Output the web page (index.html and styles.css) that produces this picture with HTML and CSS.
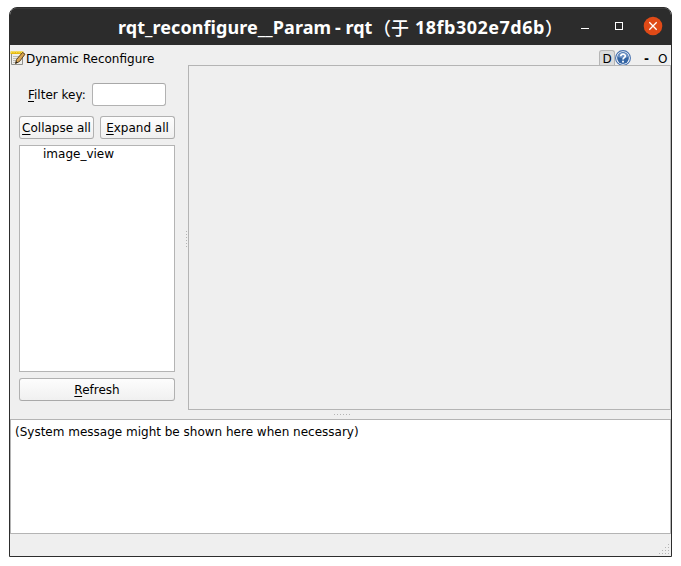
FILE: index.html
```html
<!DOCTYPE html>
<html lang="zh-CN">
<head>
<meta charset="utf-8">
<title>rqt_reconfigure__Param - rqt</title>
<link rel="stylesheet" href="styles.css">
</head>
<body>
<div class="window">
  <header class="titlebar">
    <h1 class="title"><span class="t-name">rqt_reconfigure__Param</span><span class="t-app">- rqt</span><span class="t-cjk">（于</span><span class="t-host">18fb302e7d6b</span><span class="t-cjk">）</span></h1>
    <svg class="controls" width="90" height="36" viewBox="0 0 90 36">
      <path d="M4 20.5h8" stroke="#fff"/>
      <rect x="38.500" y="14.500" width="7" height="7" fill="none" stroke="#fff"/>
      <circle cx="76" cy="18" r="9.300" fill="#e04a17"/>
      <path d="M72.300 14.300l7.400 7.400M79.700 14.300l-7.400 7.400" stroke="#fff" stroke-width="1.300"/>
    </svg>
  </header>
  <main class="content">
    <div class="dock">
      <svg class="note" width="16" height="16" viewBox="0 0 16 16">
        <path d="M1.500 3.500h11v11h-11z" fill="#eeeeec" stroke="#8f908c"/>
        <path d="M3 6.500h8M3 8.500h6M3 10.500h5M3 12.500h4" stroke="#bcbdb9"/>
        <path d="M.5 1.500h13v2.500H.5z" fill="#e5b913"/>
        <path d="M1 1h1.300v2H1zM3.500 1h1.200v2H3.500zM6 1h1.200v2H6zM8.500 1h1.200v2H8.500zM11 1h1.200v2H11z" fill="#f8df4c"/>
        <path d="M5.500 13.500l1-4L12.500 2.500l2.500 1.700-5.500 7.300z" fill="#d8a452" stroke="#5d4420"/>
        <path d="M5.500 13.500l.7-2.300 1.600 1.200z" fill="#222"/>
      </svg>
      <span class="dock-title">Dynamic Reconfigure</span>
      <span class="dock-d">D</span>
      <svg class="help" width="16" height="16" viewBox="0 0 16 16">
        <circle cx="8" cy="8" r="7.400" fill="#fff" stroke="#446fae" stroke-width="1.100"/>
        <circle cx="8" cy="8" r="5.900" fill="#3465a4"/>
        <path d="M2.500 7a5.600 5.600 0 0 1 11 0q-5 2-11 0" fill="#6b90c3"/>
        <path d="M5.800 6.200C5.800 3.500 10.300 3.500 10.300 6C10.300 7.600 8 7.600 8 9.500" fill="none" stroke="#fff" stroke-width="1.700"/>
        <rect x="7.100" y="10.700" width="1.800" height="1.800" fill="#fff"/>
      </svg>
      <b class="dock-min">-</b>
      <span class="dock-o">O</span>
    </div>
    <div class="workspace">
      <section class="sidebar">
        <div class="filter"><label for="f"><u>F</u>ilter key:</label><input id="f" type="text"></div>
        <div class="pair"><button><u>C</u>ollapse all</button><button><u>E</u>xpand all</button></div>
        <div class="tree">image_view</div>
        <button class="refresh"><u>R</u>efresh</button>
      </section>
      <div class="split-v"><i></i></div>
      <section class="params"></section>
    </div>
    <div class="split-h"><i></i></div>
    <div class="message">(System message might be shown here when necessary)</div>
    <footer class="status">
      <svg width="12" height="12" viewBox="0 0 12 12" fill="#b4b4b4">
        <path d="M10 1h1v1h-1zM7 4h1v1H7zM10 4h1v1h-1zM4 7h1v1H4zM7 7h1v1H7zM10 7h1v1h-1zM1 10h1v1H1zM4 10h1v1H4zM7 10h1v1H7zM10 10h1v1h-1z"/>
      </svg>
    </footer>
  </main>
</div>
</body>
</html>
```
FILE: styles.css
```css
* { box-sizing: border-box; }
body {
  margin: 0;
  padding: 7px 9px;
  background: #fff;
  color: #000;
  font: 12px/14px "DejaVu Sans", sans-serif;
}
.window {
  width: 663px;
  height: 550px;
  display: flex;
  flex-direction: column;
  border: 1px solid #2d2d2d;
  border-radius: 8px 8px 0 0;
  background: #efefef;
  overflow: hidden;
}
.titlebar {
  height: 37px;
  flex: none;
  display: flex;
  background: #2c2c2c;
  box-shadow: inset 0 1px #3a3a3a;
  padding-left: 108px;
}
.title {
  margin: 0;
  width: 459px;
  flex: none;
  display: flex;
  white-space: pre;
  color: #fff;
  font: bold 18px/38px "Noto Sans", "Noto Sans CJK SC", sans-serif;
}
.title span { flex: none; }
.t-name { width: 217px; letter-spacing: 0.07px; }
.t-app { width: 38px; }
.t-cjk { width: 42px; font-family: "Noto Sans CJK SC", sans-serif; font-weight: 500; }
.t-host { width: 130px; letter-spacing: 0.5px; }
.controls { flex: none; display: block; }
.content { flex: 1; display: flex; flex-direction: column; }
.dock { height: 20px; flex: none; display: flex; padding-top: 5px; }
.note { flex: none; }
.dock-title { width: 573px; padding-top: 2px; }
.dock-d {
  width: 16px;
  height: 15px;
  border: 1px solid #b5b5b5;
  border-bottom: 0;
  border-radius: 3px 3px 0 0;
  background: #dcdcdc;
  text-align: center;
  padding-top: 1px;
}
.help { flex: none; }
.dock-min { width: 27px; padding: 2px 0 0 13px; }
.dock-o { padding-top: 2px; }
.workspace { height: 345px; flex: none; display: flex; }
.sidebar { width: 172px; padding: 18px 7px 0 9px; display: flex; flex-direction: column; }
.filter { display: flex; padding-left: 9px; align-items: center; }
.filter label { width: 64px; }
input {
  width: 74px;
  height: 23px;
  border: 1px solid #b2b2b2;
  border-top-color: #a8a8a8;
  border-radius: 3px;
  background: #fff;
  padding: 0;
}
u { text-decoration: underline; text-decoration-thickness: 1px; text-underline-offset: 2px; text-decoration-skip-ink: none; }
.pair { display: flex; gap: 6px; margin: 10px 0 6px; }
button {
  flex: none;
  height: 23px;
  width: 75px;
  padding: 0;
  border: 1px solid #b1b1b1;
  border-bottom-color: #a9a9a9;
  border-radius: 3px;
  background: linear-gradient(#fdfdfd, #f0f0f0);
  color: inherit;
  font: inherit;
  white-space: nowrap;
}
.tree { height: 227px; flex: none; border: 1px solid #b4b4b4; background: #fff; padding: 1px 23px; }
.refresh { width: 156px; margin-top: 6px; }
.split-v { width: 6px; display: flex; padding-left: 4px; align-items: center; }
.split-v i {
  width: 1px;
  height: 16px;
  margin-top: 3px;
  background: repeating-linear-gradient(#b4b4b4 0 1px, transparent 1px 3px);
}
.params { flex: 1; border: 1px solid #b4b4b4; }
.split-h { height: 9px; flex: none; display: flex; justify-content: center; padding-top: 4px; }
.split-h i {
  width: 16px;
  height: 1px;
  margin-left: 2px;
  background: repeating-linear-gradient(90deg, #b4b4b4 0 1px, transparent 1px 3px);
}
.message { height: 115px; flex: none; border: 1px solid #b4b4b4; background: #fff; padding: 5px 4px; }
.status { flex: 1; display: flex; justify-content: flex-end; align-items: flex-end; padding: 0 1px 1px 0; }
```
